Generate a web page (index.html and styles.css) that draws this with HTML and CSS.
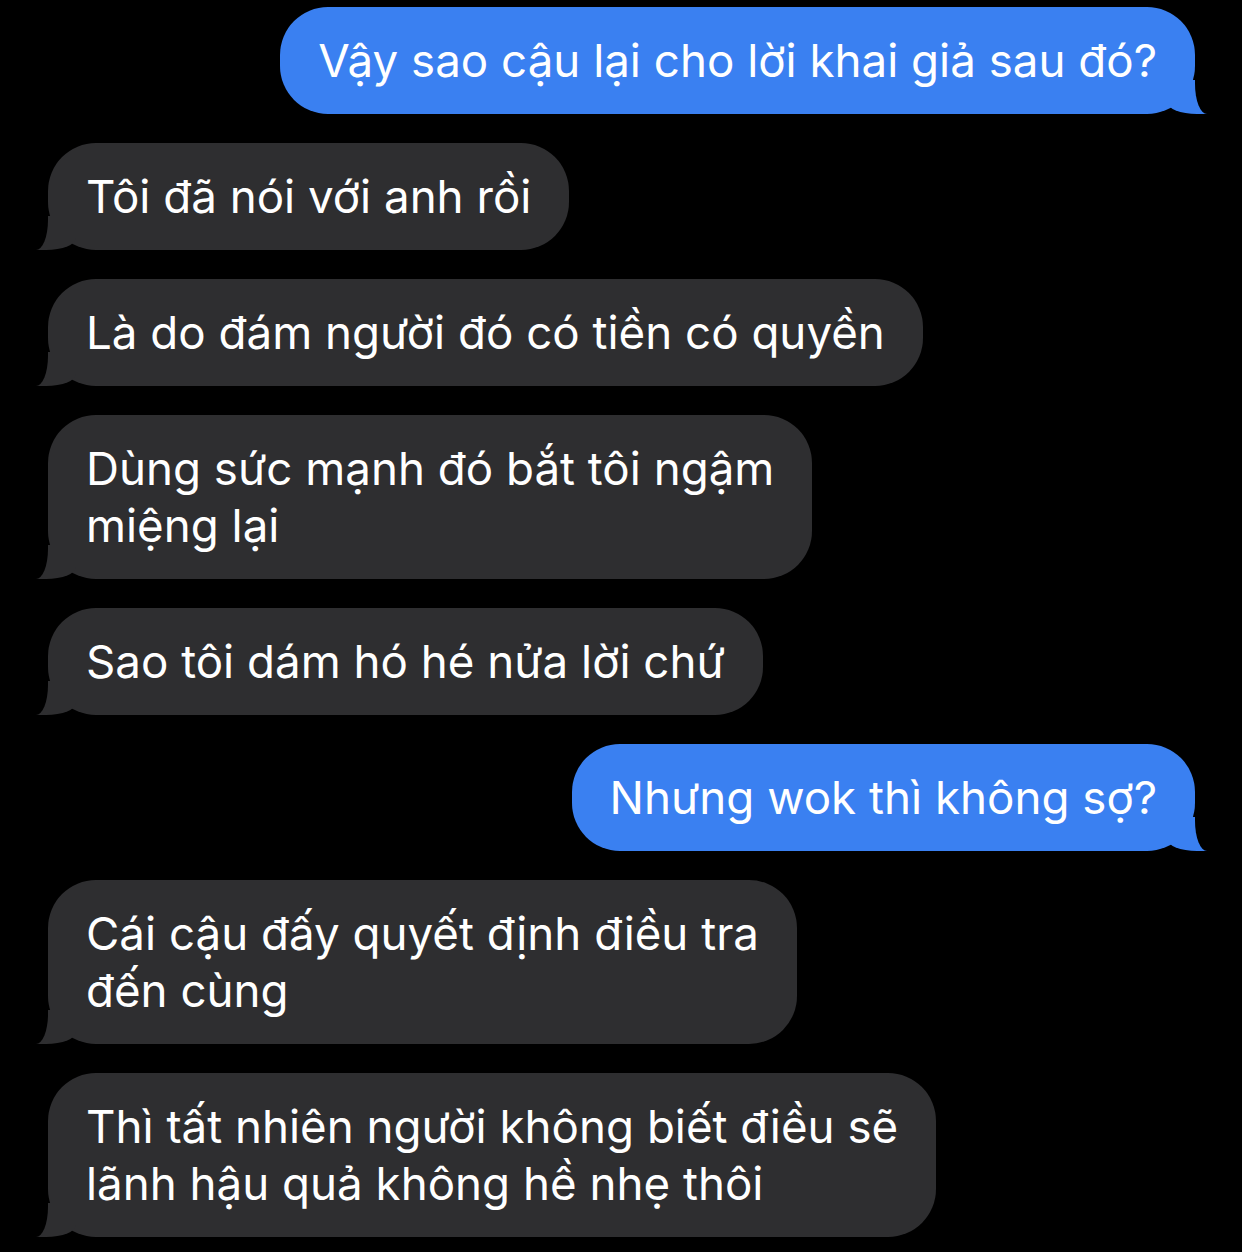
FILE: index.html
```html
<!DOCTYPE html>
<html lang="vi">
<head>
    <meta charset="UTF-8">
    <meta name="viewport" content="width=device-width, initial-scale=1.0">
    <title>Tin nhắn</title>
    <link rel="stylesheet" href="styles.css">
</head>
<body>
    <div class="thread">
        <div class="bubble sent">Vậy sao cậu lại cho lời khai giả sau đó?</div>
        <div class="bubble received">Tôi đã nói với anh rồi</div>
        <div class="bubble received">Là do đám người đó có tiền có quyền</div>
        <div class="bubble received">Dùng sức mạnh đó bắt tôi ngậm<br>miệng lại</div>
        <div class="bubble received">Sao tôi dám hó hé nửa lời chứ</div>
        <div class="bubble sent">Nhưng wok thì không sợ?</div>
        <div class="bubble received">Cái cậu đấy quyết định điều tra<br>đến cùng</div>
        <div class="bubble received">Thì tất nhiên người không biết điều sẽ<br>lãnh hậu quả không hề nhẹ thôi</div>
    </div>
</body>
</html>
```

FILE: styles.css
```css
html, body {
    background-color: #000;
}
body {
    margin: 0;
    font-family: Inter, "Noto Sans", sans-serif;
}
.thread {
    display: flex;
    flex-direction: column;
    align-items: flex-start;
    gap: 29px;
    padding: 7px 47px 20px 48px;
}
.bubble {
    position: relative;
    padding: 25px 38px;
    font-size: 45.7px;
    line-height: 57px;
    color: #fff;
    border-radius: 48px;
    white-space: nowrap;
}
.sent {
    align-self: flex-end;
    background-color: #3a80f1;
}
.received {
    background-color: #2e2e30;
}
.bubble::before,
.bubble::after {
    content: "";
    position: absolute;
    bottom: 0;
    height: 34px;
}
.sent::before {
    right: -12px;
    width: 40px;
    background-color: #3a80f1;
    border-bottom-left-radius: 30px 12px;
}
.sent::after {
    right: -44px;
    width: 44px;
    background-color: #000;
    border-bottom-left-radius: 12px 30px;
}
.received::before {
    left: -12px;
    width: 40px;
    background-color: #2e2e30;
    border-bottom-right-radius: 30px 12px;
}
.received::after {
    left: -44px;
    width: 44px;
    background-color: #000;
    border-bottom-right-radius: 12px 30px;
}
```
